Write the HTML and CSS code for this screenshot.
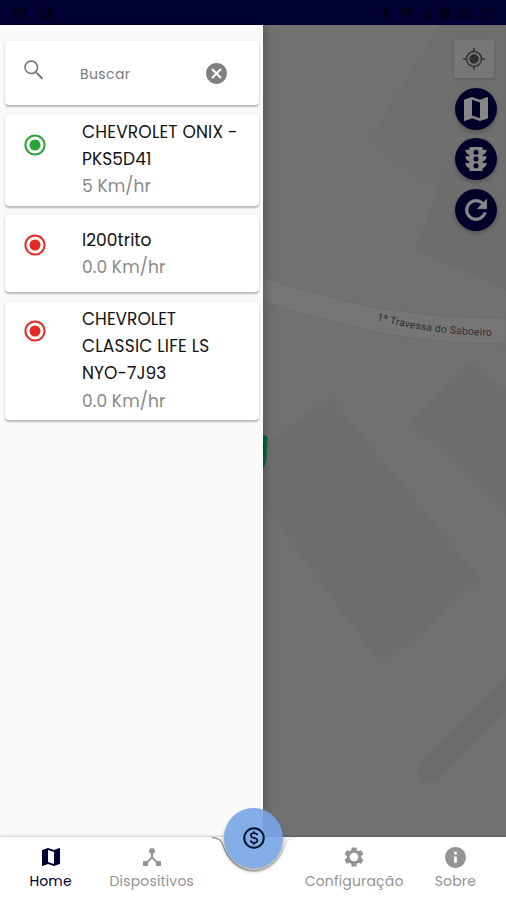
FILE: index.html
```html
<!DOCTYPE html>
<html lang="pt-BR">
<head>
<meta charset="utf-8">
<meta name="viewport" content="width=device-width">
<title>Home</title>
<link rel="stylesheet" href="styles.css">
</head>
<body>
<div class="app">
  <header class="status">
    <svg class="status-left" width="42" height="16" viewBox="0 0 42 16" fill="currentColor"><path fill-rule="evenodd" d="M1 3h12v11H1V3zm1 9h9L8 8l-2 2-2-1z"/><path fill-rule="evenodd" d="M27 2h11v12H27zm3 3v5h5V5z"/></svg>
    <div class="status-right">
      <svg width="74" height="16" viewBox="0 0 74 16" fill="currentColor"><path d="M4 4l6 6-3 3V3l3 3-6 6" fill="none" stroke="currentColor" stroke-width="2"/><path d="M20 5q8-5 16 0l-8 9zM41 14L54 2v12zM62 3h3V1h4v2h3v11h-10z"/></svg>
      <span class="clock">08:27</span>
    </div>
  </header>
  <main class="stage">
    <aside class="drawer">
      <div class="card search">
        <svg class="search-icon" width="26" height="26" viewBox="0 0 24 24"><path fill="#777" d="M15.500 14.300h-.79l-.28-.27A6.470 6.470 0 0 0 16 9.500 6.500 6.500 0 1 0 9.500 16c1.610 0 3.090-.59 4.230-1.570l.27.28v.79l5.200 5.190L20.490 19.300l-4.990-5zm-6 .2C6.700 14.500 4.500 12.300 4.500 9.500S6.700 4.500 9.500 4.500s5 2.200 5 5-2.200 5-5 5z"/></svg>
        <span class="placeholder">Buscar</span>
        <svg class="clear" width="25" height="25" viewBox="0 0 24 24"><path fill="#808080" d="M12 2C6.470 2 2 6.470 2 12s4.470 10 10 10 10-4.470 10-10S17.530 2 12 2zm5 13.590L15.590 17 12 13.410 8.410 17 7 15.590 10.590 12 7 8.410 8.410 7 12 10.590 15.590 7 17 8.410 13.410 12 17 15.590z"/></svg>
      </div>
      <div class="card onix">
        <svg class="dot green" width="22" height="22" viewBox="0 0 22 22"><circle cx="11" cy="11" r="9.600"/><circle class="core" cx="11" cy="11" r="5.500"/></svg>
        <div class="info"><div class="l1">CHEVROLET ONIX -</div><div class="l2">PKS5D41</div><div class="speed">5 Km/hr</div></div>
      </div>
      <div class="card l200">
        <svg class="dot red" width="22" height="22" viewBox="0 0 22 22"><circle cx="11" cy="11" r="9.600"/><circle class="core" cx="11" cy="11" r="5.500"/></svg>
        <div class="info"><div class="l3">l200trito</div><div class="speed">0.0 Km/hr</div></div>
      </div>
      <div class="card classic">
        <svg class="dot red" width="22" height="22" viewBox="0 0 22 22"><circle cx="11" cy="11" r="9.600"/><circle class="core" cx="11" cy="11" r="5.500"/></svg>
        <div class="info"><div class="l4">CHEVROLET</div><div class="l5">CLASSIC LIFE LS</div><div class="l6">NYO-7J93</div><div class="speed">0.0 Km/hr</div></div>
      </div>
    </aside>
    <section class="map">
      <svg class="map-art" width="244" height="812" viewBox="262 25 244 812">
        <path d="M441 25L370 142l68 48 68 43V25z" fill="#6f6f6f" stroke="#6b6b6b" stroke-width=".7"/>
        <path d="M446 170l-30 79 90 40V197z" fill="#6e6e6e" stroke="#6a6a6a" stroke-width=".7"/>
        <path d="M262 277c65 20 125 41 244 41v26c-105 0-165-19-244-42z" fill="#767676" stroke="#696969" stroke-width=".8"/>
        <path d="M262 446l69-49 150 183-93 82q-6 4-11-3L282 530l-20-28zM467 361l-56 62 95 94V390z" fill="#6e6e6e"/>
        <path d="M431 770l90-91" stroke="#6c6c6c" stroke-width="25" stroke-linecap="round"/>
        <path d="M250 435h14q4 0 3.500 5l-1 17q-1 9-4 13z" fill="#006b35"/><path d="M262 442l2 2-1 14-1 5z" fill="#222b25"/>
        <path id="street" d="M376.500 320Q428 335 500 336" fill="none"/>
        <text class="street"><textPath href="#street" textLength="117">1ª Travessa do Saboeiro</textPath></text>
      </svg>
      <div class="controls">
        <div class="locate"><svg width="24" height="24" viewBox="0 0 24 24" fill="none" stroke="#303030" stroke-width="1.500"><circle cx="12" cy="12" r="7.500"/><circle cx="12" cy="12" r="4" fill="#303030"/><path d="M12 1v3.500M12 19.500V23M1 12h3.500M19.500 12H23"/></svg></div>
        <div class="round"><svg width="32" height="32" viewBox="0 0 24 24"><path fill="#868686" d="M20.500 3l-.16.03L15 5.100 9 3 3.360 4.900c-.21.07-.36.25-.36.48V20.500c0 .28.22.5.5.5l.16-.03L9 18.900l6 2.100 5.640-1.900c.21-.07.36-.25.36-.48V3.500c0-.28-.22-.5-.5-.5zM15 19l-6-2.110V5l6 2.110V19z"/></svg></div>
        <div class="round"><svg width="32" height="32" viewBox="0 0 24 24"><path fill="#868686" fill-rule="evenodd" d="M20 10h-3V8.860c1.720-.45 3-2 3-3.860h-3V4c0-.55-.45-1-1-1H8c-.55 0-1 .45-1 1v1H4c0 1.860 1.280 3.410 3 3.860V10H4c0 1.860 1.280 3.410 3 3.860V15H4c0 1.860 1.280 3.410 3 3.860V20c0 .55.45 1 1 1h8c.55 0 1-.45 1-1v-1.140c1.720-.45 3-2 3-3.860h-3v-1.140c1.720-.45 3-2 3-3.860zm-8 8.900a1.900 1.900 0 1 1 0-3.800 1.900 1.900 0 0 1 0 3.800zm0-5a1.900 1.900 0 1 1 0-3.800 1.900 1.900 0 0 1 0 3.800zm0-5a1.900 1.900 0 1 1 0-3.800 1.900 1.900 0 0 1 0 3.800z"/></svg></div>
        <div class="round"><svg width="32" height="32" viewBox="0 0 24 24"><path fill="#868686" stroke="#868686" stroke-width=".5" d="M17.650 6.350A7.960 7.960 0 0 0 12 4a8 8 0 1 0 7.730 10h-2.080A6 6 0 1 1 12 6c1.660 0 3.140.69 4.220 1.780L13 11h7V4l-2.350 2.350z"/></svg></div>
      </div>
    </section>
  </main>
  <footer class="nav">
    <div class="tab home"><svg width="24" height="24" viewBox="0 0 24 24"><path fill="currentColor" d="M20.500 3l-.16.03L15 5.100 9 3 3.360 4.900c-.21.07-.36.25-.36.48V20.500c0 .28.22.5.5.5l.16-.03L9 18.900l6 2.100 5.640-1.900c.21-.07.36-.25.36-.48V3.500c0-.28-.22-.5-.5-.5zM15 19l-6-2.110V5l6 2.110V19z"/></svg><span>Home</span></div>
    <div class="tab"><svg width="24" height="24" viewBox="0 0 24 24"><path fill="currentColor" d="M17 16l-4-4V8.820C14.160 8.400 15 7.300 15 6c0-1.660-1.340-3-3-3S9 4.340 9 6c0 1.300.84 2.400 2 2.820V12l-4 4H3v5h5v-3.050l4-4.200 4 4.200V21h5v-5h-4z"/></svg><span>Dispositivos</span></div>
    <div class="tab"></div>
    <div class="tab"><svg width="24" height="24" viewBox="0 0 24 24"><path fill="currentColor" d="M19.140 12.940c.04-.3.060-.61.060-.94s-.02-.64-.07-.94l2.030-1.580c.18-.14.23-.41.12-.61l-1.920-3.320c-.12-.22-.37-.29-.59-.22l-2.390.96c-.5-.38-1.030-.7-1.620-.94l-.36-2.540c-.04-.24-.24-.41-.48-.41h-3.840c-.24 0-.43.17-.47.41l-.36 2.540c-.59.24-1.130.57-1.620.94l-2.390-.96c-.22-.08-.47 0-.59.22L2.740 8.870c-.12.21-.08.47.12.61l2.030 1.580c-.05.3-.09.63-.09.94s.02.64.07.94l-2.030 1.580c-.18.14-.23.41-.12.61l1.920 3.320c.12.22.37.29.59.22l2.390-.96c.5.38 1.030.7 1.620.94l.36 2.540c.05.24.24.41.48.41h3.840c.24 0 .44-.17.47-.41l.36-2.540c.59-.24 1.130-.56 1.620-.94l2.390.96c.22.08.47 0 .59-.22l1.920-3.320c.12-.22.07-.47-.12-.61l-2.010-1.580zM12 16.300a4.300 4.300 0 1 1 0-8.600 4.300 4.300 0 0 1 0 8.600z"/></svg><span>Configuração</span></div>
    <div class="tab about"><svg width="25" height="25" viewBox="0 0 24 24"><path fill="currentColor" d="M12 2C6.480 2 2 6.480 2 12s4.480 10 10 10 10-4.480 10-10S17.520 2 12 2zm1.300 15h-2.600v-6h2.600v6zm0-8h-2.600V6.500h2.600V9z"/></svg><span>Sobre</span></div>
    <svg class="notch" width="92" height="44" viewBox="0 0 92 44">
      <defs><linearGradient id="edge"><stop offset="0" stop-color="#8a8a8a"/><stop offset=".45" stop-color="#b5b5b5"/><stop offset="1" stop-color="#eee"/></linearGradient></defs>
      <path d="M4 0Q12 0 14 6C20 24 32 34 46 34S72 24 78 6Q80 0 88 0z" fill="#f3f3f3"/>
      <path d="M4 .5Q12 1 14 6C20 24 32 34 46 34S72 24 78 6Q80 1 88 .5" fill="none" stroke="url(#edge)" stroke-width="1.300"/>
    </svg>
    <div class="fab"><svg width="26" height="26" viewBox="0 0 24 24" fill="none" stroke="#07122a" stroke-width="1.900"><circle cx="12" cy="12" r="9"/><path d="M15 9.400C14.700 8 13.600 7.500 12 7.500c-1.800 0-2.900.8-2.900 2.100 0 3 6 1.700 6 4.800 0 1.300-1.200 2.100-3.100 2.100-1.800 0-3-.8-3.200-2.200M12 5.800v1.700M12 16.500v1.700" stroke-width="1.600"/></svg></div>
  </footer>
</div>
</body>
</html>
```
FILE: styles.css
```css
* { box-sizing: border-box; }
body { margin: 0; font-family: Poppins, Lato, "Open Sans", sans-serif; }
svg { display: block; flex: none; }
.app { width: 506px; height: 900px; display: flex; flex-direction: column; overflow: hidden; background: #fafafa; }
.status { height: 25px; flex: none; background: #000035; color: #00001a; display: flex; justify-content: space-between; padding: 5px 9px 0 13px; }
.status-right { display: flex; gap: 4px; }
.clock { font: 500 15px/18px Roboto, sans-serif; letter-spacing: .6px; }
.stage { height: 812px; flex: none; display: flex; }
.drawer { width: 263px; flex: none; background: #fafafa; padding: 16px 4px 0 5px; display: flex; flex-direction: column; position: relative; z-index: 1; box-shadow: 1px 0 10px rgba(0,0,0,.3); }
.card { background: #fff; border-radius: 4px; box-shadow: 0 2px 2px rgba(0,0,0,.25), 0 0 3px rgba(0,0,0,.07); display: flex; flex: none; padding-left: 19px; }
.search { height: 64px; }
.search-icon { margin-top: 16px; margin-left: -3px; }
.placeholder { width: 126px; margin-left: 33px; font-size: 14px; line-height: 20px; margin-top: 23px; color: #777; letter-spacing: .4px; }
.clear { margin-top: 20px; margin-left: -2px; }
.onix { height: 92px; margin-top: 9px; padding-top: 5px; }
.l200 { height: 77px; margin-top: 9px; padding-top: 12px; }
.classic { height: 118px; margin-top: 10px; padding-top: 4px; }
.dot { fill: none; stroke-width: 2; margin-top: 15px; }
.l200 .dot { margin-top: 7px; }
.classic .dot { margin-top: 14px; }
.dot .core { stroke: none; }
.green { stroke: #29a338; }
.green .core { fill: #29a338; }
.red { stroke: #e52a25; }
.red .core { fill: #e52a25; }
.info { margin-left: 36px; font-size: 17px; line-height: 27.200px; color: #111; white-space: nowrap; }
.l1 { letter-spacing: .18px; }
.l2 { letter-spacing: .1px; }
.l3 { letter-spacing: .05px; }
.l5 { letter-spacing: .2px; }
.l6 { letter-spacing: .1px; }
.speed { color: #888; letter-spacing: .1px; }
.map { flex: 1; background: #717171; position: relative; }
.map-art { margin-left: -1px; }
.street { font: 10.500px Roboto, sans-serif; fill: #303030; }
.controls { position: absolute; top: 15px; right: 8px; display: flex; flex-direction: column; align-items: center; }
.locate { width: 40px; height: 38px; margin: 0 4px 10px 0; background: #777; box-shadow: 0 1px 3px rgba(0,0,0,.18); display: grid; place-items: center; }
.round { width: 42px; height: 42px; margin-bottom: 8.400px; border-radius: 50%; background: #000028; box-shadow: 0 2px 4px rgba(0,0,0,.25); display: grid; place-items: center; }
.nav { height: 63px; flex: none; position: relative; z-index: 2; display: flex; background: #fff; box-shadow: 0 -1px 2px rgba(0,0,0,.2); }
.tab { width: 101.200px; flex: none; display: flex; flex-direction: column; align-items: center; padding-top: 8px; color: #949494; font-size: 14px; }
.tab span { line-height: 20px; margin-top: 2px; letter-spacing: .16px; }
.about svg { margin-bottom: -1px; }
.tab.home { color: #000035; }
.fab { position: absolute; left: 224px; top: -29px; width: 59px; height: 60px; border-radius: 50%; background: linear-gradient(90deg, transparent 39px, #769fdc 39px) 0 0 / 59px 29px no-repeat, #84aee8; box-shadow: 0 3px 4px rgba(0,0,0,.3); display: grid; place-items: center; }
.notch { position: absolute; left: 208px; top: 0; }
```
